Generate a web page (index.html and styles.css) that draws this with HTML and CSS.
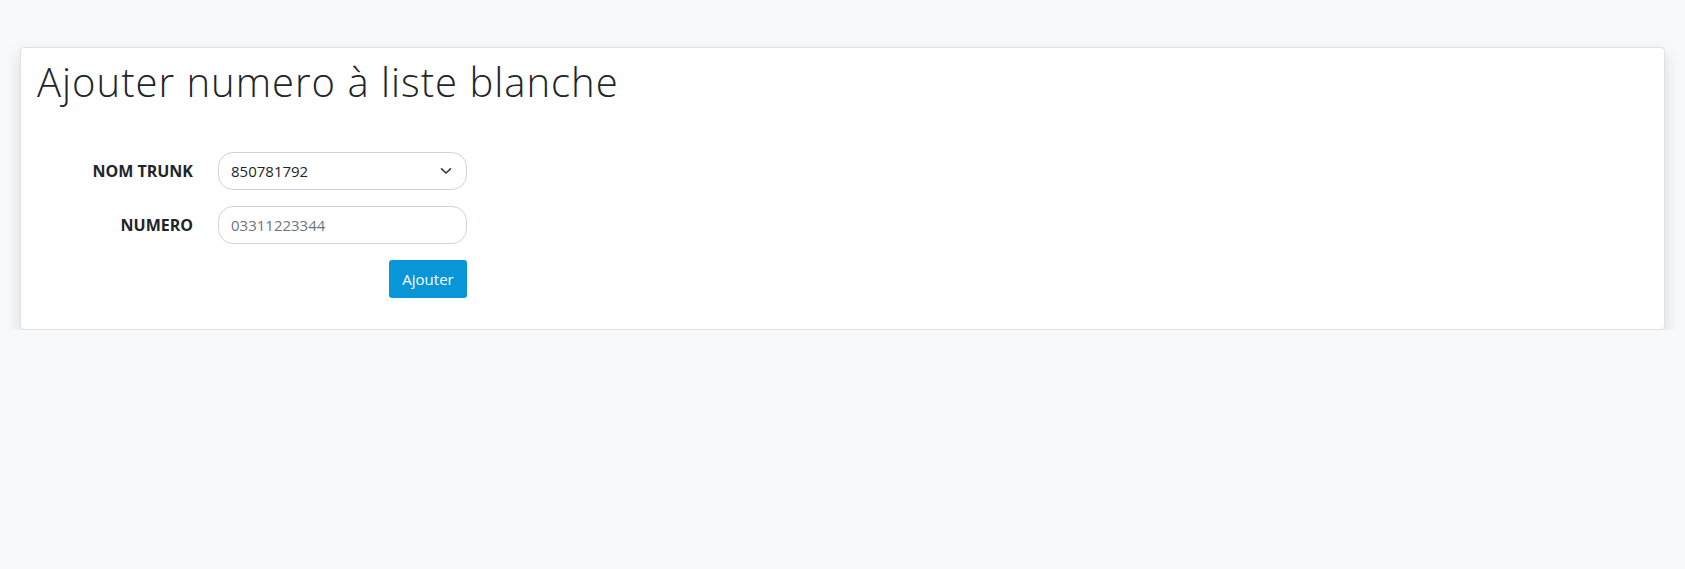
FILE: index.html
```
<!DOCTYPE html>
<html lang="fr">
<head>
<meta charset="utf-8">
<title>Ajouter numero à liste blanche</title>
<link rel="stylesheet" href="styles.css">
</head>
<body>
<main class="page">
  <section class="card">
    <h1 class="card-title">Ajouter numero à liste blanche</h1>
    <form class="form">
      <label class="form-label" for="trunk">NOM TRUNK</label>
      <div class="select" id="trunk">
        <span class="select-value">850781792</span>
        <svg class="chevron" width="12" height="8" viewBox="0 0 12 8"><path d="M1.5 1.8 L6 6 L10.5 1.8" fill="none" stroke="#343a40" stroke-width="1.6" stroke-linecap="round" stroke-linejoin="round"/></svg>
      </div>
      <label class="form-label" for="numero">NUMERO</label>
      <input class="input" id="numero" type="text" placeholder="03311223344">
      <div class="actions">
        <button class="btn" type="button">Ajouter</button>
      </div>
    </form>
  </section>
</main>
</body>
</html>
```
FILE: styles.css
```
html, body {
  margin: 0;
  padding: 0;
  background: #f8f9fa;
  font-family: "Open Sans", "Liberation Sans", sans-serif;
  color: #212529;
}
.page {
  padding: 47px 20px 0 20px;
}
.card {
  background: #fff;
  border: 1px solid #dee2e6;
  border-radius: 4px;
  box-shadow: 0 6px 16px rgba(0, 0, 0, 0.13);
  padding: 10px 16px 30px 16px;
  box-sizing: border-box;
  height: 283px;
}
.card-title {
  margin: 0;
  font-family: "Open Sans", Lato, sans-serif;
  font-weight: 300;
  font-size: 40px;
  line-height: 48px;
  letter-spacing: 1px;
  color: #212529;
}
.form {
  margin-top: 46px;
  display: grid;
  grid-template-columns: 156px 249px;
  column-gap: 25px;
  row-gap: 16px;
  align-items: center;
}
.form-label {
  text-align: right;
  font-weight: 700;
  font-size: 16px;
}
.select, .input {
  box-sizing: border-box;
  height: 38px;
  border: 1px solid #ced4da;
  border-radius: 15px;
  background: #fff;
  font-family: "Open Sans", sans-serif;
  font-size: 15px;
  padding: 0 12px;
  color: #212529;
}
.select {
  display: flex;
  align-items: center;
  justify-content: space-between;
  padding-right: 14px;
}
.input::placeholder {
  color: #6c757d;
}
.input {
  outline: none;
}
.actions {
  grid-column: 2;
  display: flex;
  justify-content: flex-end;
}
.btn {
  height: 38px;
  width: 78px;
  border: none;
  border-radius: 3px;
  background: #0996d8;
  color: #fff;
  font-family: "Open Sans", sans-serif;
  font-size: 15px;
  padding: 0;
}
```
